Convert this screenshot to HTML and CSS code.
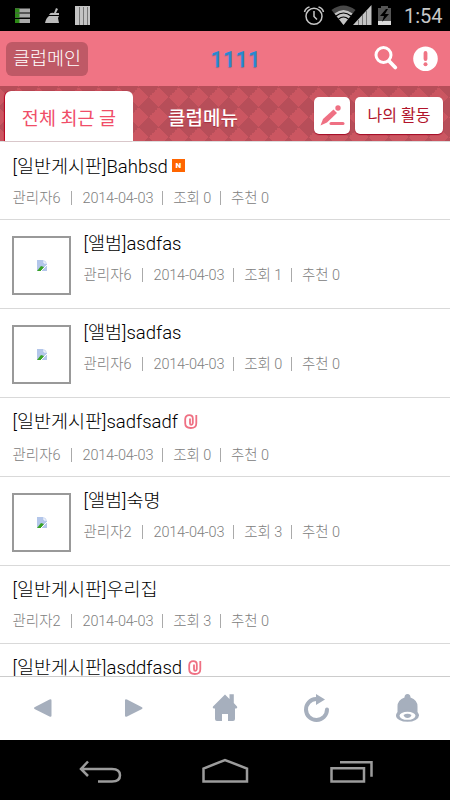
FILE: index.html
```html
<!DOCTYPE html>
<html lang="ko">
<head>
<meta charset="utf-8">
<title>클럽</title>
<link rel="stylesheet" href="styles.css">
</head>
<body>
<div class="status">
  <svg width="100" height="31" viewBox="0 0 100 31">
    <g fill="#aaa"><path d="M15 8.500h15v4H15zM15 13.500h15v4H15zM15 19h15v4H15z"/></g>
    <path fill="#2c8a16" d="M15 8.500h4.500v4H15zM15 13.500h4.500v4H15zM15 19h4.500v4H15z"/>
    <path fill="#bbb" d="M56 8l2 1-2 4h3v2H49q1-3 5-2zM49 16h10l-1 2 1 5H45q1-5 4-7z"/>
    <path fill="#c4c4c4" d="M75 6h15v19H75z"/><path stroke="#777" d="M79.500 7v18M83.500 7v18M87.500 7v18"/>
  </svg>
  <svg class="status-right" width="102" height="31" viewBox="300 0 102 31">
    <g fill="none" stroke="#c6c6c6" stroke-width="1.500"><circle cx="314" cy="16.300" r="8"/><path d="M314 11v5.500l3 3M304.500 12q1-4 5-5M323.500 12q-1-4-5-5"/></g>
    <path fill="#484848" d="M331.500 10q12-9 24 0L343.500 25z"/>
    <path fill="#c4c4c4" d="M334.500 13.500q9-7 18 0L343.500 25z"/>
    <path fill="none" stroke="#000" stroke-width="1.200" d="M336 16q7.500-6 15 0M338.500 19q5-4 10 0"/>
    <path fill="#c4c4c4" d="M371.500 5v20H353z"/><path stroke="#777" d="M358.500 20v5M362.500 15v10M366.500 11v14"/>
    <path fill="#555" d="M381 6h7v2h3v17h-13V8h3z"/><path fill="#ddd" d="M378 21h13v4h-13z"/><path fill="#000" d="M386 9l-6 7h4l-2 6 7-8h-4l3-5z"/>
  </svg>
  <span class="clock">1:54</span>
</div>
<header class="header">
  <a class="club">클럽메인</a>
  <h1 class="name">1111</h1>
  <svg width="66" height="30" viewBox="374 44 66 30">
    <circle cx="383.500" cy="55" r="7.500" fill="none" stroke="#fff" stroke-width="3"/>
    <path d="M389 61l6.300 6.500" stroke="#fff" stroke-width="3.800" stroke-linecap="round"/>
    <circle cx="425.500" cy="58.700" r="12.300" fill="#fff"/>
    <path d="M425.500 53v6" stroke="#f07484" stroke-width="3.800" stroke-linecap="round"/><circle cx="425.500" cy="64.200" r="2" fill="#f07484"/>
  </svg>
</header>
<nav class="tabs">
  <a class="tab active">전체 최근 글</a>
  <a class="tab">클럽메뉴</a>
  <a class="write"><svg width="36" height="36" viewBox="314 97 36 36"><path d="M320.500 125.500l2.500-6.500 10.500-9.500 3.500 3.500-10 9.500z" fill="#ef7083"/><circle cx="338" cy="108" r="2.700" fill="#ef7083"/><path d="M331 123.600h12" stroke="#ef7083" stroke-width="3" stroke-linecap="round"/></svg></a>
  <a class="mine">나의 활동</a>
</nav>
<main class="list">
  <article class="row first"><div class="body"><h2>[일반게시판]<b>Bahbsd</b><i class="new">N</i></h2><p><span>관리자<b>6</b></span><span class="date">2014-04-03</span><span>조회 <b>0</b></span><span>추천 <b>0</b></span></p></div></article>
  <article class="row album"><div class="thumb"><svg width="10" height="11" viewBox="0 0 10 11"><path d="M0 0h7l3 3v8H0z" fill="#b3c6ea"/><path d="M0 11l4-5 3 1-3 4z" fill="#38a326"/><path d="M7 0v3h3M10 5l-6 6" stroke="#fff" fill="none"/></svg></div><div class="body"><h2>[앨범]<b>asdfas</b></h2><p><span>관리자<b>6</b></span><span class="date">2014-04-03</span><span>조회 <b>1</b></span><span>추천 <b>0</b></span></p></div></article>
  <article class="row album"><div class="thumb"><svg width="10" height="11" viewBox="0 0 10 11"><path d="M0 0h7l3 3v8H0z" fill="#b3c6ea"/><path d="M0 11l4-5 3 1-3 4z" fill="#38a326"/><path d="M7 0v3h3M10 5l-6 6" stroke="#fff" fill="none"/></svg></div><div class="body"><h2>[앨범]<b>sadfas</b></h2><p><span>관리자<b>6</b></span><span class="date">2014-04-03</span><span>조회 <b>0</b></span><span>추천 <b>0</b></span></p></div></article>
  <article class="row clipped"><div class="body"><h2>[일반게시판]<b>sadfsadf</b><svg class="clip" width="14" height="16" viewBox="0 0 14 16"><path d="M6 4.500v4.700q0 1.600 1.300 1.600T8.800 9.200V4.500Q8.800 1.200 5.200 1.200T1.200 5v4.300Q1.200 14 6.800 14T12.300 9.300V1" fill="none" stroke="#ef7083" stroke-width="1.800"/></svg></h2><p><span>관리자<b>6</b></span><span class="date">2014-04-03</span><span>조회 <b>0</b></span><span>추천 <b>0</b></span></p></div></article>
  <article class="row album"><div class="thumb"><svg width="10" height="11" viewBox="0 0 10 11"><path d="M0 0h7l3 3v8H0z" fill="#b3c6ea"/><path d="M0 11l4-5 3 1-3 4z" fill="#38a326"/><path d="M7 0v3h3M10 5l-6 6" stroke="#fff" fill="none"/></svg></div><div class="body"><h2>[앨범]숙명</h2><p><span>관리자<b>2</b></span><span class="date">2014-04-03</span><span>조회 <b>3</b></span><span>추천 <b>0</b></span></p></div></article>
  <article class="row"><div class="body"><h2>[일반게시판]우리집</h2><p><span>관리자<b>2</b></span><span class="date">2014-04-03</span><span>조회 <b>3</b></span><span>추천 <b>0</b></span></p></div></article>
  <article class="row"><div class="body"><h2>[일반게시판]<b>asddfasd</b><svg class="clip" width="14" height="16" viewBox="0 0 14 16"><path d="M6 4.500v4.700q0 1.600 1.300 1.600T8.800 9.200V4.500Q8.800 1.200 5.200 1.200T1.200 5v4.300Q1.200 14 6.800 14T12.300 9.300V1" fill="none" stroke="#ef7083" stroke-width="1.800"/></svg></h2></div></article>
</main>
<footer class="toolbar">
  <svg width="450" height="63" viewBox="0 677 450 63" fill="#a6afbd">
    <path d="M35 707l14.500-7.500q2-.8 2 1v15q0 1.800-2 1L35 709.200q-2-1.100 0-2.200zM141.500 707l-14.500-7.500q-2-.8-2 1v15q0 1.800 2 1l14.500-7.300q2-1.100 0-2.200z"/>
    <path d="M225 694.500L213 706.500q-1 2 2 2v10.500q0 2 2 2h5v-7h6v7h5q2 0 2-2v-10.500q3 0 2-2L233.800 703v-8.700h-4.300v4.600z"/>
    <path d="M327 709.500a10.500 10.500 0 1 1-11-10.500" fill="none" stroke="#a6afbd" stroke-width="4" stroke-linecap="round"/><path d="M316 694l9 5.500-9 5.500z"/>
    <path d="M404.500 697.500q0-3.500 3-3.500t3 3.500q7 2.500 7 9v6.500h-20v-6.500q0-6.500 7-9z"/><ellipse cx="407.500" cy="715.500" rx="11.500" ry="6.300"/><ellipse cx="407.500" cy="715.800" rx="8" ry="4" fill="#fff"/><path d="M403.500 715q4-2.500 8 0-1 3-4 3t-4-3z"/>
  </svg>
</footer>
<div class="navbar">
  <svg width="450" height="60" viewBox="0 740 450 60" fill="none" stroke="#9c9c9c" stroke-width="2.500">
    <path d="M88 761.500l-7 7.500 7 7M81 769h31q8 0 8 6.300t-8 6.300H98M203.500 781.500v-13l21.500-8.500 22 8.500v13zM331.500 768.200h32.500v13.300h-32.500zM340 762.300h31.500v14.500"/>
  </svg>
</div>
</body>
</html>
```

FILE: styles.css
```css
* { box-sizing: border-box; }
body {
  margin: 0;
  width: 450px;
  height: 800px;
  overflow: hidden;
  display: flex;
  flex-direction: column;
  background: #fff;
  font-family: Roboto, "Noto Sans CJK KR", sans-serif;
}
svg { display: block; flex: none; }
h1, h2, p { margin: 0; font-weight: 300; }
.status { height: 31px; background: #000; display: flex; flex: none; }
.status-right { margin-left: 200px; }
.clock { color: #c8c8c8; font-size: 20px; line-height: 33px; margin-left: 2px; }
.header {
  height: 55px;
  flex: none;
  background: #f07484;
  display: flex;
  align-items: center;
  justify-content: space-between;
  padding: 0 10px 0 6px;
}
.club {
  width: 82px;
  height: 34px;
  margin-top: 1px;
  border-radius: 6px;
  background: #bf5966;
  color: #fff;
  font-size: 18.500px;
  line-height: 35px;
  text-align: center;
  font-weight: 300;
}
.name {
  font-size: 22px;
  font-weight: 500;
  color: #2789d0;
  text-shadow: 0 1px 1px #8c6a8a;
  width: 48px;
  margin: 1px 0 0 42px;
}
.header svg { margin-left: 35px; }
.tabs {
  height: 56px;
  flex: none;
  display: flex;
  padding: 5px 7px 0 5px;
  border-bottom: 1px solid #ddd;
  background-color: #cb5661;
  background-image:
    linear-gradient(45deg, #b74e59 25%, transparent 25% 75%, #b74e59 75%),
    linear-gradient(-45deg, #b74e59 25%, transparent 25% 75%, #b74e59 75%);
  background-size: 20px 20px;
  background-position: 9px 1px;
}
.tab {
  width: 128px;
  height: 50px;
  color: #fff;
  font-size: 18.500px;
  line-height: 56px;
  text-align: center;
}
.tab + .tab { width: 140px; font-weight: 500; font-size: 19px; line-height: 55px; text-shadow: 0 1px 1px #a8303e; }
.active {
  background: #fff;
  color: #f04d68;
  border-radius: 6px 6px 0 0;
  box-shadow: -1px 0 1px #b9001e;
}
.write, .mine {
  background: #fff;
  border-radius: 5px;
  height: 37px;
  margin-top: 6px;
  box-shadow: 0 1px 1px #a40b25;
}
.write { width: 36px; margin-left: 41px; }
.mine { width: 88px; margin-left: 5px; color: #b1142b; font-size: 16px; line-height: 38px; text-align: center; }
.list { flex: 1; overflow: hidden; }
.row { height: 78px; border-bottom: 1px solid #d9d9d9; padding: 0 12px 0 12.500px; display: flex; }
.album { height: 89px; padding-left: 12px; }
.clipped { height: 79px; }
.thumb {
  width: 59px;
  height: 59px;
  margin: 16px 12.500px 0 0;
  border: 2px solid #999;
  display: flex;
  align-items: center;
  justify-content: center;
}
.body { padding-top: 10px; }
.first .body { padding-top: 11px; }
h2 { display: flex; align-items: center; height: 28px; font-size: 18.500px; line-height: 28px; color: #000; white-space: nowrap; }
h2 b, p b { font-weight: inherit; }
p { display: flex; height: 20px; margin-top: 8px; font-size: 14.500px; line-height: 20px; color: #808080; white-space: nowrap; }
.clipped p { margin-top: 10px; }
p span + span { display: flex; white-space: pre; letter-spacing: -0.100px; }
p span + span::before { content: ""; width: 1px; height: 14px; margin: 2px 10px 0 9px; background: #aaa; }
p .date::before { margin-left: 10px; margin-right: 11px; }
p span.date { letter-spacing: -0.200px; }
.new {
  width: 13px;
  height: 13px;
  margin: -4px 0 0 4px;
  background: #ff6500;
  color: #fff;
  font: 900 8px/13px Roboto, sans-serif;
  text-align: center;
}
.clip { margin-left: 6px; }
.toolbar { height: 64px; flex: none; border-top: 1px solid #ccc; background: #fff; }
.navbar { height: 60px; flex: none; background: #000; }
```
